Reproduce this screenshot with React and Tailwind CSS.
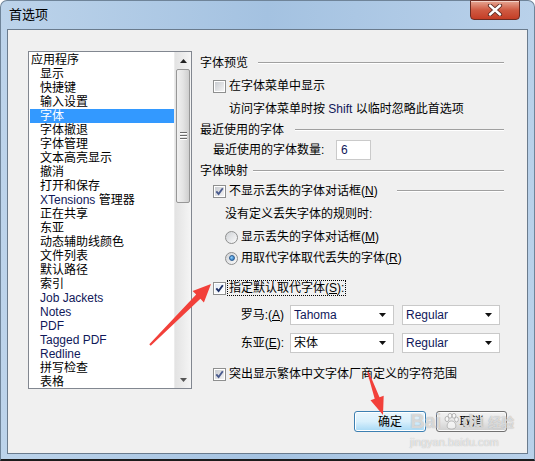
import React from 'react';

const font = "font-['Liberation_Sans','Noto_Sans_CJK_SC',sans-serif]";

const items = [
  { t: '应用程序', top: true },
  { t: '显示' },
  { t: '快捷键' },
  { t: '输入设置' },
  { t: '字体', sel: true },
  { t: '字体撤退' },
  { t: '字体管理' },
  { t: '文本高亮显示' },
  { t: '撤消' },
  { t: '打开和保存' },
  { t: 'XTensions 管理器', latin: 'XTensions', rest: '\u00a0管理器' },
  { t: '正在共享' },
  { t: '东亚' },
  { t: '动态辅助线颜色' },
  { t: '文件列表' },
  { t: '默认路径' },
  { t: '索引' },
  { t: 'Job Jackets', en: true },
  { t: 'Notes', en: true },
  { t: 'PDF', en: true },
  { t: 'Tagged PDF', en: true },
  { t: 'Redline', en: true },
  { t: '拼写检查' },
  { t: '表格' },
];

const Check = ({ checked, bright }) => (
  <span className="w-[13px] h-[13px] border border-[#8e8f8f] bg-white p-[1px] flex shrink-0">
    <span
      className={
        'flex-1 flex items-center justify-center ' +
        (bright ? 'bg-gradient-to-br from-[#e4ecf6] to-[#ffffff]' : 'bg-gradient-to-br from-[#c9ccd1] to-[#f4f4f4]')
      }
    >
      {checked && (
        <svg width="9" height="9" viewBox="0 0 9 9">
          <path d="M1.3 4.3 L3.6 7 L7.8 1.3" fill="none" stroke={bright ? '#1c2f66' : '#4a5b8e'} strokeWidth="1.9" />
        </svg>
      )}
    </span>
  </span>
);

const Radio = ({ on }) => (
  <span className="w-[13px] h-[13px] rounded-full border border-[#8e8f8f] bg-gradient-to-br from-[#cfd2d6] to-[#fbfbfb] flex items-center justify-center shrink-0">
    {on && <span className="w-[6px] h-[6px] rounded-full bg-[radial-gradient(circle_at_35%_35%,#8fd0ff,#1864b3)] border border-[#2d5c8f]" />}
  </span>
);

const U = ({ children }) => <span className="underline underline-offset-1">{children}</span>;

const Select = ({ w, value, latin }) => (
  <div className={`h-[20px] border border-[#c9c9c9] bg-white flex items-center justify-between pl-[3px] pr-[7px] ${w}`}>
    <span className={latin ? 'text-[#10185a]' : ''}>{value}</span>
    <svg width="7" height="4" viewBox="0 0 7 4">
      <path d="M0 0 H7 L3.5 4 Z" fill="#111" />
    </svg>
  </div>
);

const Header = ({ label, gap }) => (
  <div className="h-full flex items-center">
    <span>{label}</span>
    <span className={`flex-1 h-[2px] border-t border-[#a0a0a0] border-b border-b-white ${gap}`} />
  </div>
);

export default function App() {
  return (
    <div className={`w-[535px] h-[461px] bg-white ${font} text-[12px] leading-[14px] text-black relative`}>
      <div className="w-full h-full rounded-t-[7px] border border-[#6f8499] border-b-2 border-b-[#1c1c1c] bg-gradient-to-r from-[#bcd3ea] via-[#a4c2e1] to-[#b9d1ea] px-[6px] pb-[5px] flex flex-col">
        <div className="h-[28px] shrink-0 flex items-start justify-between -mx-[6px]">
          <span className="ml-[8px] mt-[7px] text-[13px] leading-[14px] text-black">首选项</span>
          <div className="w-[50px] h-[20px] mr-[14px] -mt-px rounded-b-[4px] border border-[#6d2c22] bg-gradient-to-b from-[#e5a693] via-[#cf5a42] to-[#c43d25] flex items-center justify-center shadow-[inset_0_1px_0_rgba(255,255,255,0.5)]">
            <svg width="16" height="12" viewBox="0 0 16 12">
              <path d="M3 1.5 L13 10.5 M13 1.5 L3 10.5" stroke="#5a2a22" strokeWidth="4.2" strokeLinecap="round" />
              <path d="M3 1.5 L13 10.5 M13 1.5 L3 10.5" stroke="#ffffff" strokeWidth="2.4" strokeLinecap="round" />
            </svg>
          </div>
        </div>

        <div className="flex-1 border border-[#6a7b8d] bg-[#f0f0f0] pl-[20px] pr-[20px] pt-[21px] flex flex-col">
          <div className="flex items-start">
            {/* left list */}
            <div className="w-[164px] h-[338px] border border-[#828790] bg-white flex overflow-hidden">
              <div className="flex-1 pt-px pl-px">
                {items.map((it) => (
                  <div
                    key={it.t}
                    className={
                      'h-[14px] whitespace-nowrap flex items-center ' +
                      (it.top ? 'pl-[1px] ' : 'pl-[10px] ') +
                      (it.sel ? 'bg-[#3399ff] text-white' : '')
                    }
                  >
                    {it.latin ? (
                      <>
                        <span className="text-[#10185a]">{it.latin}</span>
                        <span>{it.rest}</span>
                      </>
                    ) : it.en ? (
                      <span className="text-[#10185a]">{it.t}</span>
                    ) : (
                      it.t
                    )}
                  </div>
                ))}
              </div>
              {/* scrollbar */}
              <div className="w-[17px] bg-gradient-to-r from-[#e3e3e3] to-[#f5f5f5] border-l border-[#ececec] flex flex-col">
                <div className="h-[17px] flex items-center justify-center">
                  <svg width="7" height="4" viewBox="0 0 7 4">
                    <path d="M0 4 H7 L3.5 0 Z" fill="#222" />
                  </svg>
                </div>
                <div className="h-[134px] mx-px rounded-[2px] border border-[#979797] bg-gradient-to-r from-[#f1f1f1] via-[#e4e4e4] to-[#cfcfcf] flex flex-col items-center justify-center gap-[1px]">
                  <span className="w-[7px] h-[2px] border-t border-[#6a6a6a] border-b border-b-white" />
                  <span className="w-[7px] h-[2px] border-t border-[#6a6a6a] border-b border-b-white" />
                  <span className="w-[7px] h-[2px] border-t border-[#6a6a6a] border-b border-b-white" />
                </div>
                <div className="flex-1" />
                <div className="h-[17px] flex items-center justify-center">
                  <svg width="7" height="4" viewBox="0 0 7 4">
                    <path d="M0 0 H7 L3.5 4 Z" fill="#555" />
                  </svg>
                </div>
              </div>
            </div>

            {/* right panel */}
            <div className="ml-[8px] w-[304px] flex flex-col">
              <div className="h-[24px]">
                <Header label="字体预览" gap="ml-[10px]" />
              </div>
              <div className="h-[22px] pl-[13px] flex items-center gap-[3px]">
                <Check />
                <span>在字体菜单中显示</span>
              </div>
              <div className="h-[24px] pl-[29px] flex items-center">
                访问字体菜单时按&nbsp;<span className="text-[#10185a]">Shift</span>&nbsp;以临时忽略此首选项
              </div>
              <div className="h-[18px]">
                <Header label="最近使用的字体" gap="ml-[11px]" />
              </div>
              <div className="h-[22px] pl-[13px] flex items-center">
                <span className="w-[123px]">最近使用的字体数量:</span>
                <div className="w-[35px] h-[20px] border border-[#cacaca] bg-white pl-[4px] flex items-center text-[#10185a]">6</div>
              </div>
              <div className="h-[20px]">
                <Header label="字体映射" gap="ml-[5px]" />
              </div>
              <div className="h-[20px] pl-[13px] flex items-center gap-[3px]">
                <Check checked />
                <span>
                  不显示丢失的字体对话框(<U>N</U>)
                </span>
                <span className="flex-1 ml-[16px] h-[2px] border-t border-[#a0a0a0] border-b border-b-white" />
              </div>
              <div className="h-[26px] pl-[25px] flex items-center">没有定义丢失字体的规则时:</div>
              <div className="h-[20px] pl-[25px] flex items-center gap-[3px]">
                <Radio />
                <span>
                  显示丢失的字体对话框(<U>M</U>)
                </span>
              </div>
              <div className="h-[22px] pl-[25px] flex items-center gap-[3px]">
                <Radio on />
                <span>
                  用取代字体取代丢失的字体(<U>R</U>)
                </span>
              </div>
              <div className="h-[20px] mt-[9px] pl-[13px] flex items-center gap-[2px]">
                <Check checked bright />
                <span className="outline outline-1 outline-dotted outline-black px-px">
                  指定默认取代字体(<U>S</U>):
                </span>
              </div>
              <div className="h-[20px] mt-[7px] flex items-center">
                <span className="w-[84px] text-right whitespace-nowrap">
                  罗马:(<U>A</U>)
                </span>
                <span className="w-[6px]" />
                <Select w="w-[104px]" value="Tahoma" latin />
                <span className="w-[8px]" />
                <Select w="w-[98px]" value="Regular" latin />
              </div>
              <div className="h-[20px] mt-[8px] flex items-center">
                <span className="w-[84px] text-right whitespace-nowrap">
                  东亚(<U>E</U>):
                </span>
                <span className="w-[6px]" />
                <Select w="w-[104px]" value="宋体" />
                <span className="w-[8px]" />
                <Select w="w-[98px]" value="Regular" latin />
              </div>
              <div className="h-[20px] mt-[11px] pl-[13px] flex items-center gap-[3px]">
                <Check checked />
                <span>突出显示繁体中文字体厂商定义的字符范围</span>
              </div>
            </div>
          </div>

          {/* buttons */}
          <div className="mt-[22px] flex justify-end gap-[10px]">
            <button className="w-[72px] h-[21px] rounded-[3px] border border-[#3c7fb1] bg-gradient-to-b from-[#eaf6fd] via-[#d9f0fc] to-[#a7d9f5] shadow-[inset_0_0_0_1px_#ffffff] flex items-center justify-center text-[12px]">
              确定
            </button>
            <button className="w-[71px] h-[21px] rounded-[3px] border border-[#707070] bg-gradient-to-b from-[#f2f2f2] via-[#e6e6e6] to-[#cfcfcf] shadow-[inset_0_0_0_1px_#fbfbfb] flex items-center justify-center text-[12px]">
              取消
            </button>
          </div>
        </div>
      </div>

      {/* watermark */}
      <div className="absolute left-[410px] top-[411px] flex items-end pointer-events-none whitespace-nowrap text-white/60 font-bold [text-shadow:0_0_1px_#9a9a9a]">
        <span className="text-[20px] leading-[20px]">Bai</span>
        <svg className="mx-[3px] mb-[1px]" width="15" height="17" viewBox="0 0 15 17" fill="rgba(255,255,255,0.6)" stroke="#a8a8a8" strokeWidth="0.8">
          <ellipse cx="3" cy="6" rx="2" ry="2.6" />
          <ellipse cx="6" cy="2.8" rx="1.9" ry="2.4" />
          <ellipse cx="10" cy="2.8" rx="1.9" ry="2.4" />
          <ellipse cx="12.5" cy="6.5" rx="1.9" ry="2.5" />
          <path d="M7.5 8 C4 8 2.5 12 3.5 14.5 C4.5 16.5 10.5 16.5 11.5 14.5 C12.5 12 11 8 7.5 8 Z" />
        </svg>
        <span className="text-[18px] leading-[20px]">du</span>
        <span className="ml-[4px] text-[13px] leading-[16px]">经验</span>
      </div>
      <div className="absolute left-[410px] top-[436px] text-[11px] leading-[12px] text-white/70 [text-shadow:0_0_1px_#a0a0a0] pointer-events-none">
        jingyan.baidu.com
      </div>

      {/* annotation arrows */}
      <svg className="absolute left-0 top-0 pointer-events-none" width="535" height="461" viewBox="0 0 535 461">
        <polygon
          points="149.3,344.3 196.2,294.6 192.6,291 211,284 203.9,302.4 200.4,298.8 150.7,345.7"
          fill="#f2403a"
        />
        <polygon
          points="367.3,372.2 374.7,398.8 370.5,400.3 383,415 383.7,395.7 379.5,397.2 368.7,371.8"
          fill="#f2403a"
        />
      </svg>
    </div>
  );
}
